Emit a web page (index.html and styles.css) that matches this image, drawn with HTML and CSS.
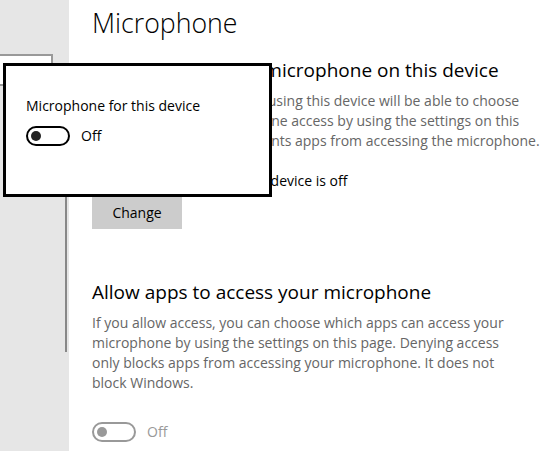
FILE: index.html
```html
<!DOCTYPE html>
<html lang="en">
<head>
    <meta charset="UTF-8">
    <title>Microphone</title>
    <link rel="stylesheet" href="styles.css">
</head>
<body>
    <div class="window">
        <div class="nav">
            <div class="nav-search"></div>
            <div class="nav-scroll"></div>
        </div>
        <div class="page">
            <h1 class="page-title">Microphone</h1>

            <h2 class="section-title">Allow access to the microphone on this device</h2>
            <p class="section-desc">If you allow access, people using this device will be able to choose<br>if their apps have microphone access by using the settings on this<br>page. Denying access prevents apps from accessing the microphone.</p>
            <p class="status">Microphone access for this device is off</p>
            <a href="javascript:;" class="btn">Change</a>

            <h2 class="section-title section-next">Allow apps to access your microphone</h2>
            <p class="section-desc">If you allow access, you can choose which apps can access your<br>microphone by using the settings on this page. Denying access<br>only blocks apps from accessing your microphone. It does not<br>block Windows.</p>
            <div class="toggle-row disabled">
                <span class="toggle"></span>
                <span class="toggle-label">Off</span>
            </div>
        </div>

        <!-- flyout opened from the Change button -->
        <div class="flyout">
            <p class="flyout-title">Microphone for this device</p>
            <div class="toggle-row">
                <span class="toggle"></span>
                <span class="toggle-label">Off</span>
            </div>
        </div>
    </div>
</body>
</html>
```

FILE: styles.css
```css
body{margin:0;font:14px/20px "Open Sans","Noto Sans",sans-serif;color:#000;background:#fff;}
.window{position:relative;display:flex;height:451px;overflow:hidden;}

.nav{position:relative;flex:none;width:69px;background:#e6e6e6;}
.nav-search{width:51px;height:28px;margin:54px 0 0 -2px;border:2px solid #999;background:#fff;}
.nav-scroll{position:absolute;right:2px;top:80px;width:2px;height:272px;background:#888;}

.page{flex:1;padding:3px 0 0 23px;white-space:nowrap;}
.page-title{margin:0;font-size:26.7px;font-weight:300;line-height:40px;}
.section-title{margin:13px 0 0;font-size:19px;font-weight:400;line-height:28px;}
.section-title.section-next{margin-top:49px;}
.section-desc{margin:7px 0 0;color:#666;}
.status{margin:20px 0 0;}
.btn{display:block;width:90px;height:32px;margin-top:6px;line-height:32px;text-align:center;background:#ccc;color:#000;text-decoration:none;}

.toggle-row{display:flex;align-items:center;gap:11px;margin-top:29px;}
.toggle{position:relative;width:40px;height:16px;border:2px solid #000;border-radius:10px;}
.toggle::after{content:"";position:absolute;left:3px;top:3px;width:10px;height:10px;border-radius:50%;background:#222;}
.disabled .toggle{border-color:#999;}
.disabled .toggle::after{background:#999;}
.disabled .toggle-label{color:#999;}

.flyout{
    position:absolute;
    left:3px;
    top:63px;
    box-sizing:border-box;
    width:269px;
    height:134px;
    padding:30px 20px 0;
    border:3px solid #000;
    background:#fff;
}
.flyout-title{margin:0;}
.flyout .toggle-row{margin-top:10px;}
```
